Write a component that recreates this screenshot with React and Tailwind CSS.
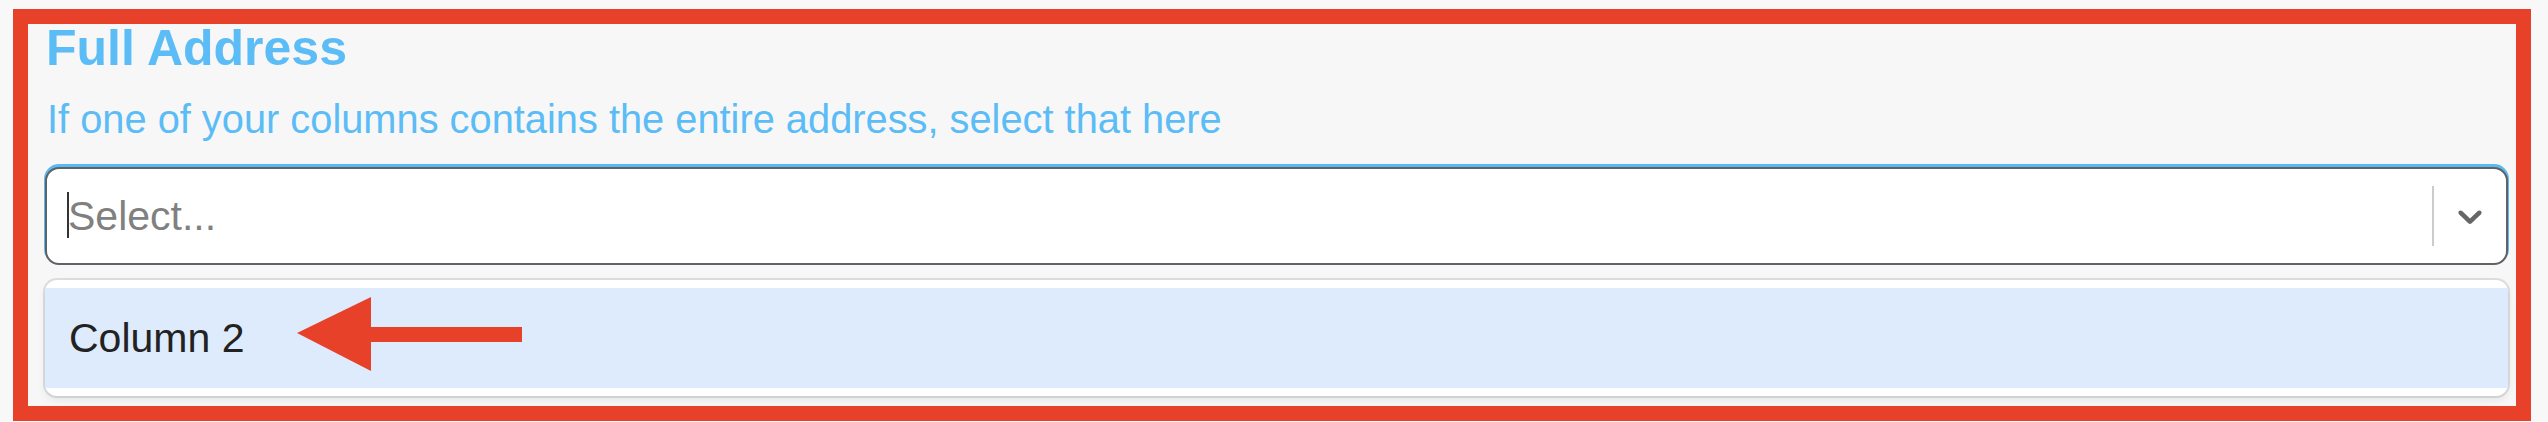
import React from 'react';

// react-select style chevron
function ChevronDown() {
  return (
    <svg width="40" height="40" viewBox="0 0 20 20" fill="#666666" aria-hidden="true">
      <path d="M4.516 7.548c0.436-0.446 1.043-0.481 1.576 0l3.908 3.747 3.908-3.747c0.533-0.481 1.141-0.446 1.574 0 0.436 0.445 0.408 1.197 0 1.615-0.406 0.418-4.695 4.502-4.695 4.502-0.217 0.223-0.502 0.335-0.787 0.335s-0.57-0.112-0.789-0.335c0 0-4.287-4.084-4.695-4.502s-0.436-1.17 0-1.615z" />
    </svg>
  );
}

function PointerArrow() {
  return (
    <svg width="226" height="74" viewBox="0 0 226 74" aria-hidden="true">
      <polygon points="0,36 74,0 74,74" fill="#e8412a" />
      <rect x="73" y="30" width="152" height="15" fill="#e8412a" />
    </svg>
  );
}

export default function App() {
  const options = ['Column 2'];

  return (
    <div className="w-full h-[422px] bg-[#f8f8f8] pt-[9px] pl-[13px] font-['Liberation_Sans',Arial,sans-serif]">
      <div className="w-[2518px] h-[412px] border-[15px] border-[#e8412a] bg-[#f7f7f7] pl-[17px] pr-[8px]">
        {/* Field label */}
        <h2 className="pt-[4px] pl-[1px] text-[50px] leading-[40px] font-bold text-[#5bbcf6]">
          Full Address
        </h2>
        <p className="mt-[27px] pl-[2px] text-[39.8px] leading-[48px] text-[#5bbcf6]">
          If one of your columns contains the entire address, select that here
        </p>

        {/* Select control */}
        <div className="mt-[24px] h-[98px] flex items-center bg-white border-2 border-[#5f6266] rounded-[14px] shadow-[0_-2px_0_1px_#5bb8f0]">
          <div className="relative flex-1 pl-[20px]">
            <span className="absolute left-[20px] top-[0px] w-[2px] h-[46px] bg-[#333]" />
            <span className="block pl-[1px] text-[41px] leading-[48px] text-[#808080]">Select...</span>
          </div>
          <span className="w-[2px] h-[60px] bg-[#cccccc]" />
          <div className="pl-[16px] pr-[16px] flex items-center">
            <ChevronDown />
          </div>
        </div>

        {/* Options menu */}
        <div className="mt-[15px] py-[8px] bg-white rounded-[12px] shadow-[0_0_0_2px_rgba(0,0,0,0.1),0_4px_8px_rgba(0,0,0,0.08)]">
          {options.map((opt) => (
            <div key={opt} className="relative pl-[24px] py-[26px] bg-[#deebfc] text-[41px] leading-[48px] text-[#222222]">
              {opt}
              <span className="absolute left-[252px] top-[9px]">
                <PointerArrow />
              </span>
            </div>
          ))}
        </div>
      </div>
    </div>
  );
}
